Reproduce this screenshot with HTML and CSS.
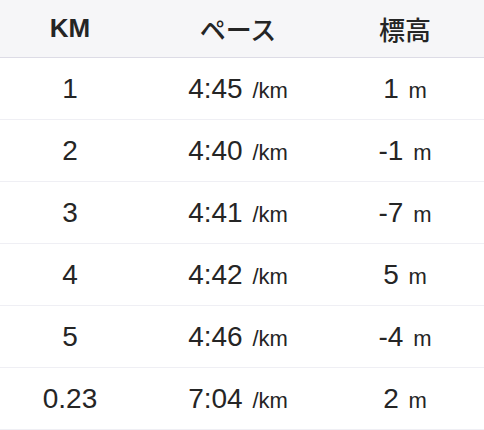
FILE: index.html
```html
<!DOCTYPE html>
<html lang="ja">
<head>
    <meta charset="UTF-8">
    <meta name="viewport" content="width=device-width, initial-scale=1.0">
    <title>ラップ</title>
    <link rel="stylesheet" href="styles.css">
</head>
<body>
    <div class="splits">
        <div class="row head">
            <div class="cell">KM</div>
            <div class="cell ja">ペース</div>
            <div class="cell ja">標高</div>
        </div>
        <div class="row">
            <div class="cell">1</div>
            <div class="cell">4:45 <span class="unit">/km</span></div>
            <div class="cell">1 <span class="unit">m</span></div>
        </div>
        <div class="row">
            <div class="cell">2</div>
            <div class="cell">4:40 <span class="unit">/km</span></div>
            <div class="cell">-1 <span class="unit">m</span></div>
        </div>
        <div class="row">
            <div class="cell">3</div>
            <div class="cell">4:41 <span class="unit">/km</span></div>
            <div class="cell">-7 <span class="unit">m</span></div>
        </div>
        <div class="row">
            <div class="cell">4</div>
            <div class="cell">4:42 <span class="unit">/km</span></div>
            <div class="cell">5 <span class="unit">m</span></div>
        </div>
        <div class="row">
            <div class="cell">5</div>
            <div class="cell">4:46 <span class="unit">/km</span></div>
            <div class="cell">-4 <span class="unit">m</span></div>
        </div>
        <div class="row">
            <div class="cell">0.23</div>
            <div class="cell">7:04 <span class="unit">/km</span></div>
            <div class="cell">2 <span class="unit">m</span></div>
        </div>
    </div>
</body>
</html>
```

FILE: styles.css
```css
body {
    margin: 0;
    padding: 0;
    background: #ffffff;
    font-family: "Liberation Sans", "Noto Sans CJK JP", sans-serif;
    color: #252525;
}
.splits {
    width: 484px;
}
.row {
    display: grid;
    grid-template-columns: 140px 196px 1fr;
    height: 61px;
    align-items: center;
    border-bottom: 1px solid #efeff4;
    font-size: 28px;
}
.row .cell {
    text-align: center;
    white-space: nowrap;
}
.row .cell:last-child {
    padding-right: 10px;
}
.head {
    height: 57px;
    background: #f6f6f8;
    border-bottom: 1px solid #dddce6;
    font-size: 26px;
    font-weight: bold;
}
.head .ja {
    font-family: "Noto Sans CJK JP", sans-serif;
    font-weight: 500;
}
.unit {
    font-size: 22px;
    margin-left: 2px;
}
```
